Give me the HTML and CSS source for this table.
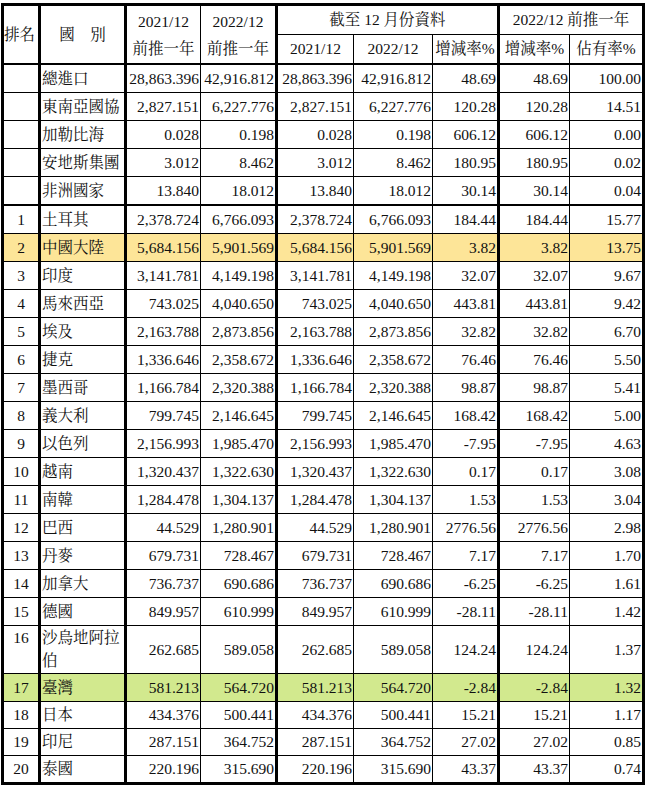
FILE: index.html
```html
<!DOCTYPE html>
<html lang="zh-Hant">
<head>
<meta charset="utf-8">
<title>進口統計</title>
<link rel="stylesheet" href="styles.css">
</head>
<body>
<div class="wrap">
<table class="stats">
<colgroup>
<col class="c1"><col class="c2"><col class="c3"><col class="c4"><col class="c5"><col class="c6"><col class="c7"><col class="c8"><col class="c9">
</colgroup>
<thead>
<tr class="h1">
<th rowspan="2" class="rank thick-r">排名</th>
<th rowspan="2" class="thick-r">國　別</th>
<th rowspan="2" class="two">2021/12<br>前推一年</th>
<th rowspan="2" class="two thick-r">2022/12<br>前推一年</th>
<th colspan="3" class="thick-r">截至 12 月份資料</th>
<th colspan="2">2022/12 前推一年</th>
</tr>
<tr class="h2">
<th>2021/12</th>
<th>2022/12</th>
<th class="thick-r">增減率%</th>
<th>增減率%</th>
<th>佔有率%</th>
</tr>
</thead>
<tbody>
<tr><td></td><td>總進口</td><td>28,863.396</td><td>42,916.812</td><td>28,863.396</td><td>42,916.812</td><td>48.69</td><td>48.69</td><td>100.00</td></tr>
<tr><td></td><td>東南亞國協</td><td>2,827.151</td><td>6,227.776</td><td>2,827.151</td><td>6,227.776</td><td>120.28</td><td>120.28</td><td>14.51</td></tr>
<tr><td></td><td>加勒比海</td><td>0.028</td><td>0.198</td><td>0.028</td><td>0.198</td><td>606.12</td><td>606.12</td><td>0.00</td></tr>
<tr><td></td><td>安地斯集團</td><td>3.012</td><td>8.462</td><td>3.012</td><td>8.462</td><td>180.95</td><td>180.95</td><td>0.02</td></tr>
<tr class="sep"><td></td><td>非洲國家</td><td>13.840</td><td>18.012</td><td>13.840</td><td>18.012</td><td>30.14</td><td>30.14</td><td>0.04</td></tr>
<tr><td>1</td><td>土耳其</td><td>2,378.724</td><td>6,766.093</td><td>2,378.724</td><td>6,766.093</td><td>184.44</td><td>184.44</td><td>15.77</td></tr>
<tr class="hl-yellow"><td>2</td><td>中國大陸</td><td>5,684.156</td><td>5,901.569</td><td>5,684.156</td><td>5,901.569</td><td>3.82</td><td>3.82</td><td>13.75</td></tr>
<tr><td>3</td><td>印度</td><td>3,141.781</td><td>4,149.198</td><td>3,141.781</td><td>4,149.198</td><td>32.07</td><td>32.07</td><td>9.67</td></tr>
<tr><td>4</td><td>馬來西亞</td><td>743.025</td><td>4,040.650</td><td>743.025</td><td>4,040.650</td><td>443.81</td><td>443.81</td><td>9.42</td></tr>
<tr><td>5</td><td>埃及</td><td>2,163.788</td><td>2,873.856</td><td>2,163.788</td><td>2,873.856</td><td>32.82</td><td>32.82</td><td>6.70</td></tr>
<tr><td>6</td><td>捷克</td><td>1,336.646</td><td>2,358.672</td><td>1,336.646</td><td>2,358.672</td><td>76.46</td><td>76.46</td><td>5.50</td></tr>
<tr><td>7</td><td>墨西哥</td><td>1,166.784</td><td>2,320.388</td><td>1,166.784</td><td>2,320.388</td><td>98.87</td><td>98.87</td><td>5.41</td></tr>
<tr><td>8</td><td>義大利</td><td>799.745</td><td>2,146.645</td><td>799.745</td><td>2,146.645</td><td>168.42</td><td>168.42</td><td>5.00</td></tr>
<tr><td>9</td><td>以色列</td><td>2,156.993</td><td>1,985.470</td><td>2,156.993</td><td>1,985.470</td><td>-7.95</td><td>-7.95</td><td>4.63</td></tr>
<tr><td>10</td><td>越南</td><td>1,320.437</td><td>1,322.630</td><td>1,320.437</td><td>1,322.630</td><td>0.17</td><td>0.17</td><td>3.08</td></tr>
<tr><td>11</td><td>南韓</td><td>1,284.478</td><td>1,304.137</td><td>1,284.478</td><td>1,304.137</td><td>1.53</td><td>1.53</td><td>3.04</td></tr>
<tr><td>12</td><td>巴西</td><td>44.529</td><td>1,280.901</td><td>44.529</td><td>1,280.901</td><td>2776.56</td><td>2776.56</td><td>2.98</td></tr>
<tr><td>13</td><td>丹麥</td><td>679.731</td><td>728.467</td><td>679.731</td><td>728.467</td><td>7.17</td><td>7.17</td><td>1.70</td></tr>
<tr><td>14</td><td>加拿大</td><td>736.737</td><td>690.686</td><td>736.737</td><td>690.686</td><td>-6.25</td><td>-6.25</td><td>1.61</td></tr>
<tr><td>15</td><td>德國</td><td>849.957</td><td>610.999</td><td>849.957</td><td>610.999</td><td>-28.11</td><td>-28.11</td><td>1.42</td></tr>
<tr class="tall"><td>16</td><td>沙烏地阿拉伯</td><td>262.685</td><td>589.058</td><td>262.685</td><td>589.058</td><td>124.24</td><td>124.24</td><td>1.37</td></tr>
<tr class="hl-green"><td>17</td><td>臺灣</td><td>581.213</td><td>564.720</td><td>581.213</td><td>564.720</td><td>-2.84</td><td>-2.84</td><td>1.32</td></tr>
<tr class="short"><td>18</td><td>日本</td><td>434.376</td><td>500.441</td><td>434.376</td><td>500.441</td><td>15.21</td><td>15.21</td><td>1.17</td></tr>
<tr class="short"><td>19</td><td>印尼</td><td>287.151</td><td>364.752</td><td>287.151</td><td>364.752</td><td>27.02</td><td>27.02</td><td>0.85</td></tr>
<tr class="short"><td>20</td><td>泰國</td><td>220.196</td><td>315.690</td><td>220.196</td><td>315.690</td><td>43.37</td><td>43.37</td><td>0.74</td></tr>
</tbody>
</table>
</div>
</body>
</html>
```

FILE: styles.css
```css
html, body {
  margin: 0;
  padding: 0;
  background: #ffffff;
}

.wrap {
  padding: 3px 0 0 1px;
}

.stats {
  border-collapse: collapse;
  table-layout: fixed;
  width: 644px;
  border: 3px solid #000;
  font-family: "Liberation Serif", "Noto Serif CJK TC", "Noto Sans CJK TC", serif;
  font-size: 15.5px;
  color: #111;
}

.c1 { width: 37px; }
.c2 { width: 86px; }
.c3 { width: 75px; }
.c4 { width: 76px; }
.c5 { width: 77px; }
.c6 { width: 79px; }
.c7 { width: 66px; }
.c8 { width: 71px; }
.c9 { width: 74px; }

.stats th,
.stats td {
  border: 1px solid #000;
  padding: 0 1px;
  white-space: nowrap;
  overflow: visible;
}

.stats th {
  font-weight: normal;
  text-align: center;
  vertical-align: middle;
  line-height: 20px;
}

.stats thead tr.h1 th { height: 28px; }
.stats thead tr.h2 th { height: 28px; }
.stats thead tr.h2 th { border-bottom: 2px solid #000; }
.stats thead th.two { line-height: 27px; border-bottom: 2px solid #000; }
.stats thead th.rank,
.stats thead tr.h1 th:nth-child(2) { border-bottom: 2px solid #000; }

.stats th.thick-r { border-right: 3px solid #000; }
.stats th.rank { padding: 0; text-align: left; }

.stats td {
  height: 27px;
  line-height: 20px;
  text-align: right;
  vertical-align: middle;
}

.stats td:nth-child(1) {
  text-align: center;
  border-right: 3px solid #000;
}

.stats td:nth-child(2) {
  text-align: left;
  border-right: 3px solid #000;
  padding-left: 1px;
}

.stats td:nth-child(4),
.stats td:nth-child(7) {
  border-right: 3px solid #000;
}

.stats tr.sep td { border-bottom: 2px solid #000; }

.stats tr.tall td { height: 47px; }
.stats tr.tall td:nth-child(1),
.stats tr.tall td:nth-child(2) {
  vertical-align: top;
  white-space: normal;
  line-height: 23px;
}

.stats tr.short td { height: 26px; }

.stats tr.hl-yellow td { background: #fde598; }
.stats tr.hl-green td { background: #d2e98e; }
```
